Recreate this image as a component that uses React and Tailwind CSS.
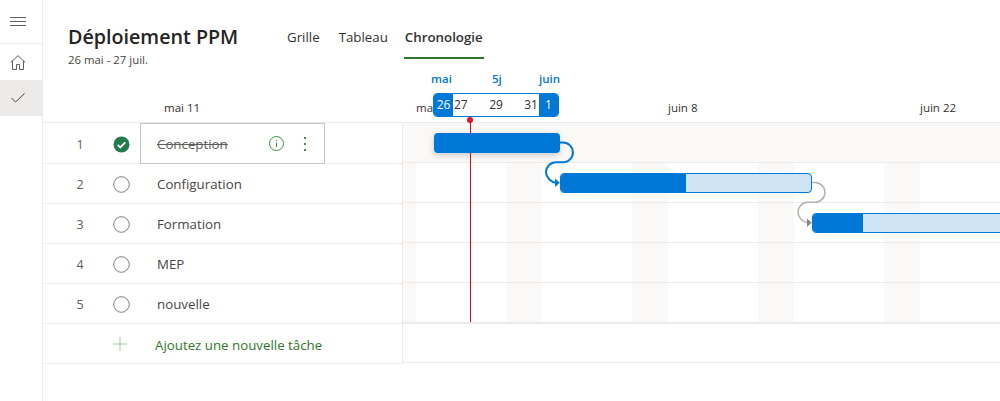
const rows = [
  { n: 1, name: 'Conception', done: true },
  { n: 2, name: 'Configuration' },
  { n: 3, name: 'Formation' },
  { n: 4, name: 'MEP' },
  { n: 5, name: 'nouvelle' },
]

const weekends = [
  'left-0 w-[13px]',
  'left-[103px] w-9',
  'left-[229px] w-9',
  'left-[355px] w-9',
  'left-[481px] w-9',
]

function StatusCircle({ done }) {
  if (done) {
    return (
      <svg width="17" height="17" viewBox="0 0 17 17">
        <circle cx="8.5" cy="8.5" r="8" fill="#237b4b" />
        <path d="M4.7 8.8l2.6 2.6 5-5" fill="none" stroke="#fff" strokeWidth="1.8" />
      </svg>
    )
  }
  return (
    <svg width="17" height="17" viewBox="0 0 17 17">
      <circle cx="8.5" cy="8.5" r="7.8" fill="#fff" stroke="#807e7c" strokeWidth="1" />
    </svg>
  )
}

function TaskRow({ row }) {
  return (
    <div className="flex h-10 items-center border-b border-[#edebe9] box-content [&:not(:first-child)]:h-[39px]">
      <span className="w-[74px] pt-1 text-center text-[12.5px] text-[#605e5c]">{row.n}</span>
      <span className="-ml-1 flex w-[17px] justify-center pt-[2px]">
        <StatusCircle done={row.done} />
      </span>
      {row.done ? (
        <div className="ml-[10px] flex h-[41px] w-[185px] items-center self-start border border-[#c8c6c4] pl-4">
          <span className="pt-[2px] text-[13.3px] text-[#605e5c] line-through">{row.name}</span>
          <svg className="ml-auto" width="15" height="15" viewBox="0 0 15 15">
            <circle cx="7.5" cy="7.500" r="7" fill="none" stroke="#3f8f45" />
            <path d="M7.500 6.500v4.500M7.500 4v1.200" stroke="#3f8f45" />
          </svg>
          <svg className="ml-[20px] mr-[17px]" width="3" height="14" viewBox="0 0 3 14">
            <path d="M0 0h2v2H0zM0 6h2v2H0zM0 12h2v2H0z" fill="#3f8f45" />
          </svg>
        </div>
      ) : (
        <span className="ml-[27px] pt-[2px] text-[13.3px] text-[#484644]">{row.name}</span>
      )}
    </div>
  )
}

function Connector({ stroke, arrow, width, dx = 0, dy = 0 }) {
  return (
    <g transform={`translate(${dx} ${dy})`}>
      <path
        d="M157 19.500H160a9.800 9.800 0 0 1 0 19.800H153a10 10 0 0 0-10 10c0 5 5 10 10 10.500H153"
        fill="none"
        stroke={stroke}
        strokeWidth={width}
      />
      <path d="M152 55.500l4.800 4.200-4.800 4.300z" fill={arrow} />
    </g>
  )
}

function Bar({ className, fill }) {
  return (
    <div className={`absolute h-5 overflow-hidden rounded-sm border border-[#0078d7] bg-[#cfe4f5] ${className}`}>
      <div className={`h-full bg-[#0078d7] ${fill}`} />
    </div>
  )
}

export default function App() {
  return (
    <div className="flex h-[401px] w-[1000px] overflow-hidden bg-white font-['Open_Sans',sans-serif]">
      {/* left nav */}
      <nav className="w-[43px] shrink-0 border-r border-[#edebe9]">
        <div className="flex h-11 items-center border-b border-[#edebe9] pl-[10px]">
          <svg width="16" height="10" viewBox="0 0 16 10">
            <path d="M0 .5h16M0 4.500h16M0 8.500h16" stroke="#605e5c" strokeWidth="1" />
          </svg>
        </div>
        <div className="flex h-9 items-center pl-[10px]">
          <svg width="16" height="15" viewBox="0 0 16 15">
            <path
              d="M.7 7.500L8 .7l7.300 6.800M2.500 6v8.500h4v-5h3v5h4V6"
              fill="none"
              stroke="#605e5c"
            />
          </svg>
        </div>
        <div className="flex h-9 items-center bg-[#edebe9] pl-[11px]">
          <svg width="14" height="10" viewBox="0 0 14 10">
            <path d="M.5 5l4 4 9-8.500" fill="none" stroke="#484644" />
          </svg>
        </div>
      </nav>

      <main className="relative min-w-0 flex-1">
        {/* title + tabs */}
        <header className="flex h-[72px] pl-[25px]">
          <div className="w-[219px] pt-[23px]">
            <h1 className="text-[19.7px] leading-7 font-semibold text-[#252423]">Déploiement PPM</h1>
            <p className="mt-px text-[11.4px] leading-4 text-[#484644]">26 mai - 27 juil.</p>
          </div>
          <div className="flex items-start gap-5 pt-[27px] text-[13.3px] text-[#323130]">
            <span className="leading-5">Grille</span>
            <span className="-ml-px leading-5">Tableau</span>
            <span className="-ml-1 h-[32px] border-b-2 border-[#31752f] px-px leading-5 font-semibold">Chronologie</span>
          </div>
        </header>

        {/* date scale */}
        <div className="relative h-[51px] border-b border-[#edebe9] text-[11.5px] text-[#323130]">
          <span className="absolute left-[121px] top-[27px]">mai 11</span>
          <span className="absolute left-[373px] top-[27px]">ma</span>
          <span className="absolute left-[625px] top-[27px]">juin 8</span>
          <span className="absolute left-[877px] top-[27px]">juin 22</span>
          <span className="absolute left-[388px] -top-[2px] font-semibold text-[#0078d7]">mai</span>
          <span className="absolute left-[449px] -top-[2px] font-semibold text-[#0078d7]">5j</span>
          <span className="absolute left-[496px] -top-[2px] font-semibold text-[#0078d7]">juin</span>
          <div className="absolute left-[390px] top-[21px] flex h-6 w-[126px] items-center overflow-hidden rounded-sm border border-[#0078d7] bg-white text-[12px]">
            <span className="flex h-full w-[19px] items-center justify-center bg-[#0078d7] text-white">26</span>
            <span className="flex flex-1 justify-between px-px">
              <span>27</span>
              <span>29</span>
              <span>31</span>
            </span>
            <span className="flex h-full w-[19px] items-center justify-center bg-[#0078d7] text-white">1</span>
          </div>
        </div>

        <div className="flex">
          {/* task list */}
          <div className="w-[359px] shrink-0">
            {rows.map((row) => (
              <TaskRow key={row.n} row={row} />
            ))}
            <div className="flex h-[39px] items-center border-b border-[#edebe9] box-content">
              <span className="w-[70px]" />
              <svg width="14" height="14" viewBox="0 0 14 14">
                <path d="M7 0v14M0 7h14" stroke="#a3c8a2" strokeWidth="1" />
              </svg>
              <span className="ml-[28px] pt-[4px] text-[13.3px] text-[#31752f]">Ajoutez une nouvelle tâche</span>
            </div>
          </div>

          {/* chart */}
          <div className="relative h-[240px] flex-1 border-l border-[#edebe9]">
            <div className="relative h-[201px] overflow-hidden border-b-2 border-[#edebe9]">
              {weekends.map((w) => (
                <div key={w} className={`absolute top-10 h-40 bg-[#faf9f8] ${w}`} />
              ))}
              <div className="absolute inset-x-0 top-0 h-[39px] bg-[#faf9f8]" />
              <div className="absolute inset-x-0 top-[39px] h-px bg-[#edebe9]" />
              <div className="absolute inset-x-0 top-[79px] h-px bg-[#edebe9]" />
              <div className="absolute inset-x-0 top-[119px] h-px bg-[#edebe9]" />
              <div className="absolute inset-x-0 top-[159px] h-px bg-[#edebe9]" />
              <div className="absolute left-[67px] top-0 h-full w-px bg-[#f0000f]" />
              <svg className="absolute left-0 top-0 overflow-visible" width="597" height="200">
                <Connector stroke="#0078d7" arrow="#0078d7" width="2" />
                <Connector stroke="#b3b0ad" arrow="#8a8886" width="1.500" dx={252} dy={40} />
              </svg>
              <div className="absolute left-[31px] top-[10px] h-5 w-[126px] rounded-sm bg-[#0078d7] shadow-[0_2px_6px_rgba(0,0,0,0.2)]" />
              <Bar className="left-[157px] top-[50px] w-[252px]" fill="w-[125px]" />
              <Bar className="left-[409px] top-[90px] w-[300px]" fill="w-[50px]" />
            </div>
            <div className="h-[39px] border-b border-[#edebe9]" />
          </div>
        </div>

        {/* today marker */}
        <div className="absolute left-[424px] top-[117px] size-[6px] rounded-full bg-[#e81123]" />
      </main>
    </div>
  )
}
